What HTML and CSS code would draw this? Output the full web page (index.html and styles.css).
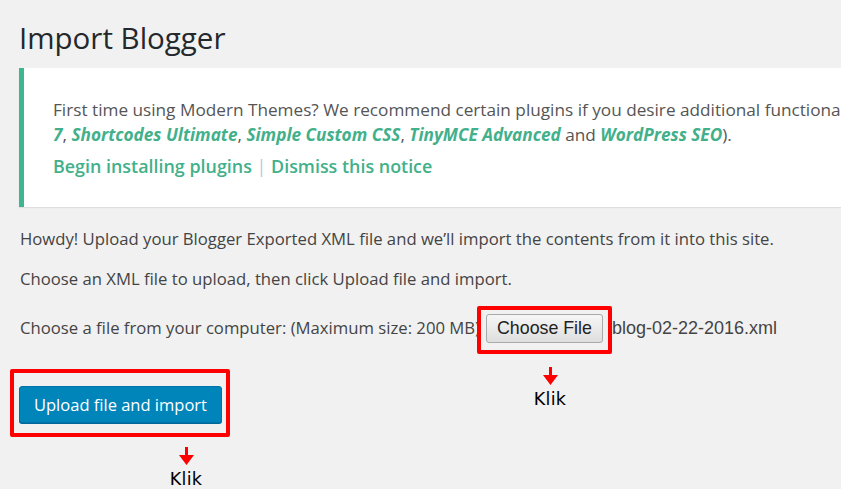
FILE: index.html
```html
<!DOCTYPE html>
<html>
<head>
<meta charset="utf-8">
<link rel="stylesheet" href="styles.css">
</head>
<body>
<div class="wrap">
  <h1 class="title">Import Blogger</h1>
  <div class="notice">
    <p class="notice-line">First time using Modern Themes? We recommend certain plugins if you desire additional functionality (<a class="plugin">Contact Form</a></p>
    <p class="notice-line"><a class="plugin">7</a>, <a class="plugin">Shortcodes Ultimate</a>, <a class="plugin">Simple Custom CSS</a>, <a class="plugin">TinyMCE Advanced</a> and <a class="plugin">WordPress SEO</a>).</p>
    <p class="notice-actions"><a class="action">Begin installing plugins</a> <span class="sep">|</span> <a class="action">Dismiss this notice</a></p>
  </div>
  <p class="text first">Howdy! Upload your Blogger Exported XML file and we’ll import the contents from it into this site.</p>
  <p class="text">Choose an XML file to upload, then click Upload file and import.</p>
  <div class="file-row">
    <span class="text">Choose a file from your computer: (Maximum size: 200 MB)</span>
    <span class="file-box">
      <span class="choose-btn">Choose File</span>
    </span>
    <span class="filename">blog-02-22-2016.xml</span>
  </div>
  <div class="hint hint-choose">
    <svg class="arrow" width="15" height="18" viewBox="0 0 15 18"><path d="M6 0 H9 V8 H15 L7.5 18 L0 8 H6 Z" fill="#f00"/></svg>
    <span class="klik">Klik</span>
  </div>
  <div class="submit-row">
    <span class="submit-box">
      <span class="upload-btn">Upload file and import</span>
    </span>
  </div>
  <div class="hint hint-upload">
    <svg class="arrow" width="15" height="18" viewBox="0 0 15 18"><path d="M6 0 H9 V8 H15 L7.5 18 L0 8 H6 Z" fill="#f00"/></svg>
    <span class="klik">Klik</span>
  </div>
</div>
</body>
</html>
```

FILE: styles.css
```css
html, body {
  margin: 0;
  padding: 0;
  background: #f1f1f1;
  overflow: hidden;
  height: 489px;
}
body {
  font-family: "Open Sans", sans-serif;
  color: #444;
}
.wrap {
  padding-left: 19px;
}
.title {
  margin: 0;
  padding: 17px 0 0 0;
  font-size: 29.5px;
  font-weight: 400;
  line-height: 41px;
  color: #23282d;
  height: 51px;
}
.notice {
  width: 900px;
  height: 139px;
  box-sizing: border-box;
  background: #fff;
  border-left: 5px solid #3db791;
  box-shadow: 0 1px 1px rgba(0,0,0,0.08);
  padding: 29px 0 0 29px;
  white-space: nowrap;
  overflow: hidden;
}
.notice p {
  margin: 0;
}
.notice-line {
  font-size: 17.2px;
  line-height: 25px;
  color: #555;
}
.plugin {
  font-style: italic;
  font-weight: 700;
  color: #42b08a;
}
.notice-actions {
  margin-top: 7px !important;
  font-size: 17.9px;
  font-weight: 600;
  line-height: 25px;
  color: #42b08a;
}
.action {
  color: #42b08a;
}
.sep {
  color: #b8c8d8;
  font-weight: 400;
}
.text {
  margin: 0;
  font-size: 16.7px;
  line-height: 20px;
  color: #444;
  padding-left: 1px;
  white-space: nowrap;
}
.first {
  margin-top: 22px;
}
.text + .text {
  margin-top: 20px;
}
.file-row {
  display: flex;
  align-items: center;
  margin-top: 24px;
  height: 30px;
}
.file-box {
  position: relative;
  margin-left: 6px;
  display: inline-flex;
}
.file-box::after {
  content: "";
  position: absolute;
  left: -9px;
  top: -8px;
  right: -9px;
  bottom: -11px;
  border: 4px solid #ff0000;
  border-radius: 2px;
}
.choose-btn {
  font-family: "Liberation Sans", Arial, sans-serif;
  font-size: 17.8px;
  color: #222;
  height: 29px;
  line-height: 27px;
  box-sizing: border-box;
  padding: 0 10px;
  border: 1px solid #a9a9a9;
  border-radius: 3px;
  background: linear-gradient(#f6f6f6, #dedede);
  white-space: nowrap;
}
.filename {
  font-family: "Liberation Sans", Arial, sans-serif;
  font-size: 18px;
  color: #444;
  margin-left: 9px;
  white-space: nowrap;
}
.hint {
  display: flex;
  flex-direction: column;
  align-items: center;
  width: 40px;
}
.hint-choose {
  margin-left: 511px;
  margin-top: 24px;
  height: 0;
}
.arrow {
  display: block;
  flex: none;
}
.klik {
  font-family: "DejaVu Sans", sans-serif;
  font-size: 17.5px;
  color: #000;
  line-height: 20px;
  margin-top: 4px;
  letter-spacing: 0.3px;
}
.submit-row {
  margin-top: 2px;
  margin-left: -9px;
}
.submit-box {
  display: inline-block;
  border: 4px solid #ff0000;
  border-radius: 2px;
  padding: 13px 4px 10px 5px;
}
.upload-btn {
  display: inline-block;
  background: #0085ba;
  border: 1px solid #0073aa;
  border-radius: 3px;
  box-shadow: 0 1px 0 #006799;
  color: #fff;
  font-size: 16.5px;
  line-height: 35px;
  height: 37px;
  box-sizing: border-box;
  padding: 0 14px;
  white-space: nowrap;
}
.hint-upload {
  margin-left: 147px;
  margin-top: 10px;
}
```
